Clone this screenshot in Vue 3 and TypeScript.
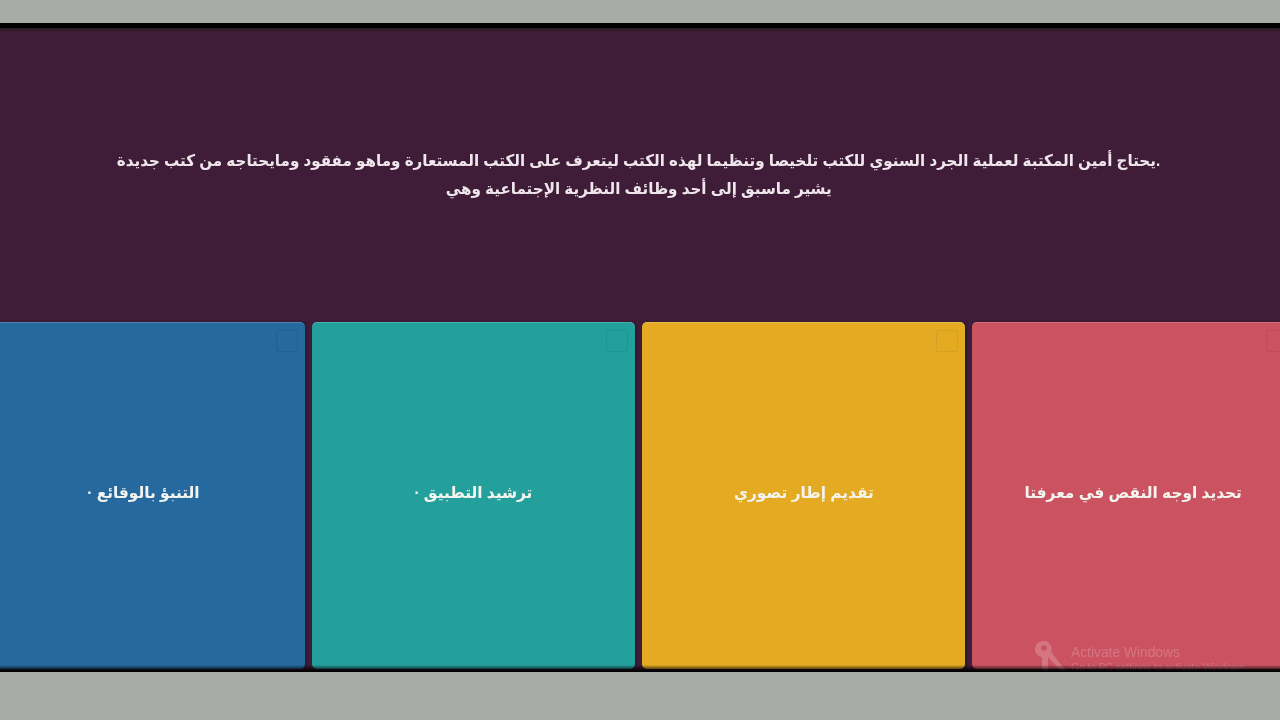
<script setup lang="ts">
interface Choice {
  text: string
  color: string
  edge: string
}

const lines: string[] = [
  'يحتاج أمين المكتبة لعملية الجرد السنوي للكتب تلخيصا وتنظيما لهذه الكتب ليتعرف على الكتب المستعارة وماهو مفقود ومايحتاجه من كتب جديدة.',
  'يشير ماسبق إلى أحد وظائف النظرية الإجتماعية وهي',
]

const choices: Choice[] = [
  { text: 'التنبؤ بالوقائع ·', color: '#26699f', edge: '#235f92' },
  { text: 'ترشيد التطبيق ·', color: '#24a09c', edge: '#209490' },
  { text: 'تقديم إطار تصوري', color: '#e3aa22', edge: '#d6a024' },
  { text: 'تحديد اوجه النقص في معرفتا', color: '#cb5260', edge: '#bf4c5a' },
]
</script>

<template>
  <main class="page">
    <div class="band band-top"></div>
    <section class="screen">
      <div class="question">
        <p v-for="line in lines" :key="line" class="line" dir="ltr">{{ line }}</p>
      </div>
      <div class="choices">
        <article
          v-for="choice in choices"
          :key="choice.text"
          class="card"
          :style="{ backgroundColor: choice.color }"
        >
          <span class="check" :style="{ borderColor: choice.edge }"></span>
          <span class="label" dir="rtl">{{ choice.text }}</span>
        </article>
      </div>
      <div class="watermark">
        <svg class="key" viewBox="0 0 34 34" width="34" height="34" aria-hidden="true">
          <path
            d="M9 1a8 8 0 0 1 7 11l16 20h-5L13 17v15H7V17A8 8 0 0 1 9 1zm0 4a3 3 0 1 0 .01 0z"
            fill="#fff"
            fill-rule="evenodd"
          />
        </svg>
        <div class="wm-text">
          <div class="wm-title">Activate Windows</div>
          <div class="wm-sub">Go to PC settings to activate Windows.</div>
        </div>
      </div>
    </section>
    <div class="band band-bottom"></div>
  </main>
</template>

<style>
html,
body {
  margin: 0;
  background: #a9aba8;
}
</style>

<style scoped>
.page {
  width: 1280px;
  height: 720px;
  display: flex;
  flex-direction: column;
  overflow: hidden;
  background: #a9aba8;
}

.band {
  flex: none;
  background: #a9aba8;
}

.band-top {
  height: 23px;
}

.band-bottom {
  flex: 1;
}

.screen {
  position: relative;
  height: 649px;
  box-sizing: border-box;
  border-top: 5px solid #000;
  border-bottom: 1px solid #000;
  background: #3f1c37;
  display: flex;
  flex-direction: column;
  overflow: hidden;
}

.screen::before,
.screen::after {
  content: "";
  position: absolute;
  left: 0;
  right: 0;
  z-index: 2;
  pointer-events: none;
}

.screen::before {
  top: 0;
  height: 5px;
  background: linear-gradient(rgba(30, 30, 30, 0.75), rgba(50, 35, 40, 0));
}

.screen::after {
  bottom: 0;
  height: 6px;
  background: linear-gradient(rgba(0, 0, 0, 0), rgba(0, 0, 0, 0.95));
}

.question {
  height: 294px;
  box-sizing: border-box;
  padding-top: 119px;
  flex: none;
  display: flex;
  flex-direction: column;
  align-items: center;
}

.line {
  margin: 0;
  height: 28px;
  line-height: 28px;
  font-family: "Liberation Sans", "DejaVu Sans", sans-serif;
  font-size: 16px;
  font-weight: 700;
  color: #efe6ec;
  white-space: nowrap;
  transform: translateX(-1.5px) scaleX(0.945);
  filter: blur(0.5px);
}

.choices {
  display: flex;
  gap: 7px;
  height: 347px;
  margin-left: -18px;
  flex: none;
}

.card {
  flex: none;
  position: relative;
  width: 323px;
  height: 347px;
  padding-bottom: 6px;
  box-sizing: border-box;
  border-radius: 5px;
  display: flex;
  align-items: center;
  justify-content: center;
  box-shadow:
    inset 0 1px 0 rgba(255, 255, 255, 0.18),
    2px 0 2px rgba(10, 20, 60, 0.35);
}

.check {
  position: absolute;
  top: 8px;
  right: 7px;
  width: 22px;
  height: 22px;
  box-sizing: border-box;
  border: 1.5px solid;
  border-radius: 2px;
  filter: blur(0.4px);
}

.label {
  font-family: "Liberation Sans", "DejaVu Sans", sans-serif;
  font-size: 16px;
  font-weight: 700;
  color: #f4f4ee;
  white-space: nowrap;
  transform: scaleX(0.96);
  filter: blur(0.5px);
}

.watermark {
  position: absolute;
  left: 1035px;
  top: 612px;
  display: flex;
  gap: 2px;
  opacity: 0.2;
  color: #fff;
  font-family: "Liberation Sans", sans-serif;
  filter: blur(0.5px);
}

.wm-title {
  font-size: 13.8px;
  line-height: 16px;
  margin-top: 5px;
}

.wm-sub {
  font-size: 10.2px;
  line-height: 12px;
  margin-top: 1px;
  white-space: nowrap;
}
</style>
